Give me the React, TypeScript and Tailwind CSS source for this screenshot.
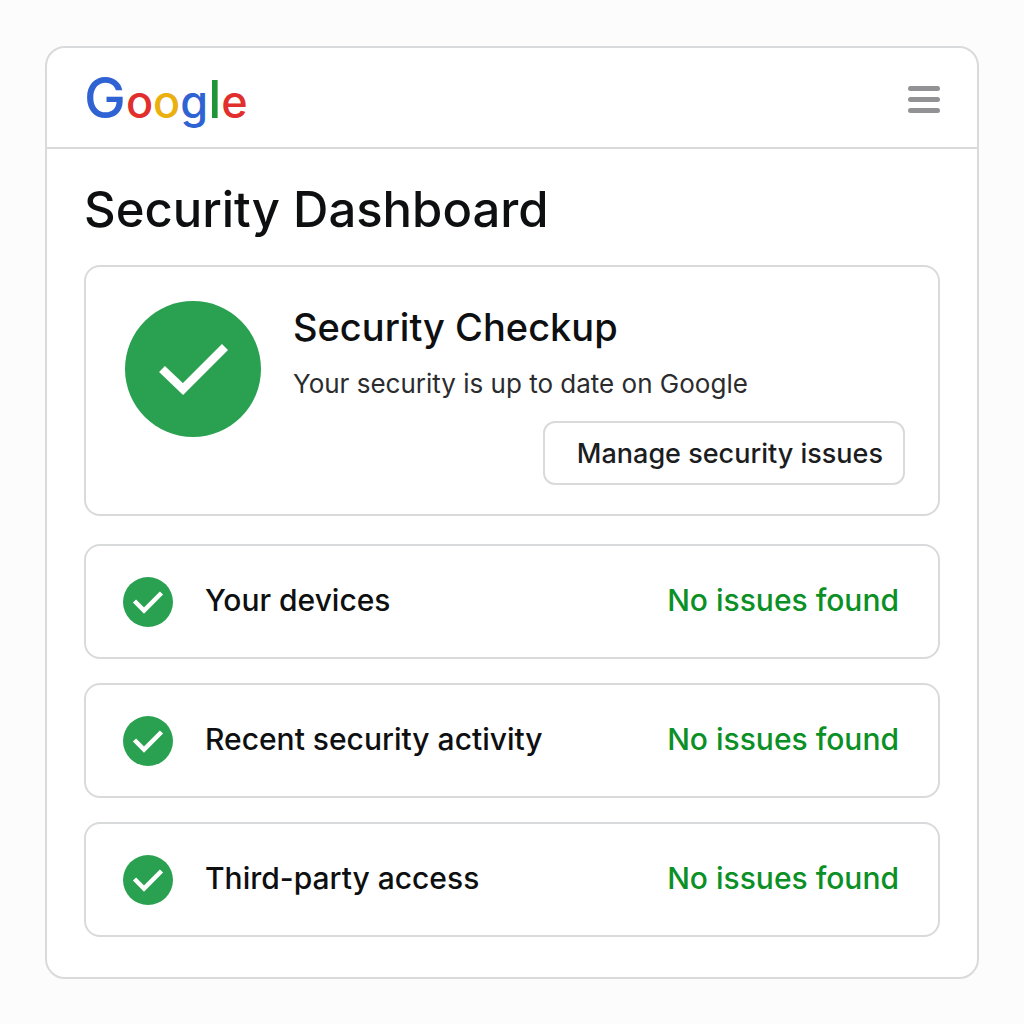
import React from 'react';

const items = [
  { title: 'Your devices', status: 'No issues found' },
  { title: 'Recent security activity', status: 'No issues found' },
  { title: 'Third-party access', status: 'No issues found' },
];

const LargeCheck = () => (
  <svg viewBox="0 0 136 136" className="h-[136px] w-[136px] shrink-0" aria-hidden="true">
    <circle cx="68" cy="68" r="68" fill="#2aa150" />
    <path d="M37 68L58 88L100 46" fill="none" stroke="#fff" strokeWidth="8.5" />
  </svg>
);

const SmallCheck = () => (
  <svg viewBox="0 0 50 50" className="mt-[5px] h-[50px] w-[50px] shrink-0" aria-hidden="true">
    <circle cx="25" cy="25" r="25" fill="#2aa150" />
    <path d="M11.500 24L21 33.500L38.500 16" fill="none" stroke="#fff" strokeWidth="4.5" />
  </svg>
);

const Logo = () => (
  <a href="#" aria-label="Google" className="pt-1 text-[45px] leading-[60px] font-medium">
    <span className="text-[56px] text-[#2f62d3]">G</span>
    <span className="text-[#e02f2c]">o</span>
    <span className="text-[#eab010]">o</span>
    <span className="text-[#2f62d3]">g</span>
    <span className="text-[52px] text-[#1e9638]">l</span>
    <span className="text-[#e02f2c]">e</span>
  </a>
);

const App = () => {
  return (
    <div className="min-h-screen bg-[#fcfcfc] px-[45px] py-[46px] font-['Inter',sans-serif] text-[#0e0f10]">
      <div className="rounded-[20px] border-2 border-[#d9dadb] bg-white">
        <header className="flex h-[101px] items-center justify-between border-b-2 border-[#d9dadb] px-[37px]">
          <Logo />
          <button type="button" aria-label="Menu" className="mt-1 flex flex-col gap-[6px]">
            <span className="h-[5px] w-8 rounded-full bg-[#929294]" />
            <span className="h-[5px] w-8 rounded-full bg-[#929294]" />
            <span className="h-[5px] w-8 rounded-full bg-[#929294]" />
          </button>
        </header>

        <main className="px-[37px] pt-[31px] pb-10">
          <h1 className="text-[49px] leading-[60px] font-medium">Security Dashboard</h1>

          <section className="mt-[25px] flex gap-8 rounded-2xl border-2 border-[#d9dadb] pt-[34px] pr-[33px] pb-[29px] pl-[39px]">
            <LargeCheck />
            <div className="flex flex-1 flex-col">
              <h2 className="text-[38px] leading-[52px] font-medium">Security Checkup</h2>
              <p className="mt-[11px] text-[26px] leading-[40px] text-[#2b2c2e]">Your security is up to date on Google</p>
              <button
                type="button"
                className="mt-[17px] self-end rounded-xl border-2 border-[#d9dadb] pt-[11px] pr-5 pb-[9px] pl-8 text-[27px] leading-[40px] font-medium text-[#1c1d1f]"
              >
                Manage security issues
              </button>
            </div>
          </section>

          <ul className="mt-7 flex flex-col gap-6">
            {items.map((item) => (
              <li
                key={item.title}
                className="flex h-[115px] items-center rounded-2xl border-2 border-[#d9dadb] pr-[39px] pb-1 pl-[37px]"
              >
                <SmallCheck />
                <span className="ml-8 flex-1 text-[30px] leading-[40px] font-medium">{item.title}</span>
                <span className="text-[30px] leading-[40px] font-medium text-[#0b9026]">{item.status}</span>
              </li>
            ))}
          </ul>
        </main>
      </div>
    </div>
  );
};

export default App;
